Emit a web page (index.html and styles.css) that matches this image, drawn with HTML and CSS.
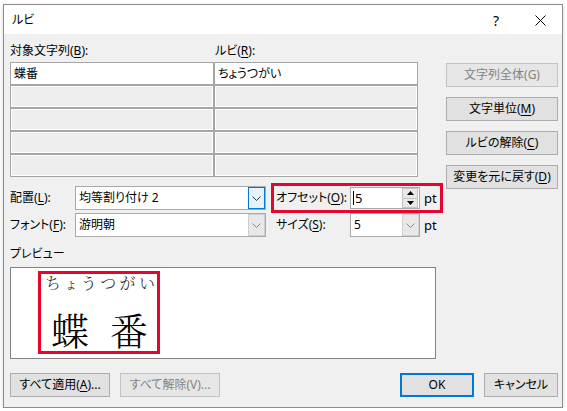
FILE: index.html
```html
<!DOCTYPE html>
<html lang="ja">
<head>
    <meta charset="UTF-8">
    <meta name="viewport" content="width=device-width, initial-scale=1.0">
    <title>ルビ</title>
    <link rel="stylesheet" href="styles.css">
</head>
<body>
    <div class="window">
        <div class="titlebar">
            <span class="title">ルビ</span>
            <span class="help">?</span>
            <svg class="close" width="11" height="11" viewBox="0 0 11 11">
                <path d="M0.5 0.5 L10.5 10.5 M10.5 0.5 L0.5 10.5" stroke="#000" stroke-width="1" fill="none"/>
            </svg>
        </div>

        <div class="content">
            <div class="main">
                <div class="left">
                    <div class="grid-labels">
                        <span>対象文字列(<u>B</u>):</span>
                        <span class="second">ルビ(<u>R</u>):</span>
                    </div>
                    <div class="ruby-grid">
                        <div class="cell filled">蝶番</div>
                        <div class="cell filled">ちょうつがい</div>
                        <div class="cell"></div>
                        <div class="cell"></div>
                        <div class="cell"></div>
                        <div class="cell"></div>
                        <div class="cell"></div>
                        <div class="cell"></div>
                        <div class="cell"></div>
                        <div class="cell"></div>
                    </div>

                    <div class="settings">
                        <div class="row">
                            <span class="lbl">配置(<u>L</u>):</span>
                            <div class="combo wide">
                                <span class="value">均等割り付け 2</span>
                                <span class="drop hot">
                                    <svg width="9" height="5" viewBox="0 0 9 5"><path d="M0.5 0.5 L4.5 4.5 L8.5 0.5" stroke="#333" fill="none"/></svg>
                                </span>
                            </div>
                            <div class="pair marked">
                                <span class="lbl2">オフセット(<u>O</u>):</span>
                                <div class="spin">
                                    <span class="value"><span class="caret"></span>5</span>
                                    <span class="spin-btns">
                                        <span class="spin-btn"><svg width="7" height="4" viewBox="0 0 7 4"><path d="M3.5 0 L7 4 L0 4 Z" fill="#000"/></svg></span>
                                        <span class="spin-btn"><svg width="7" height="4" viewBox="0 0 7 4"><path d="M0 0 L7 0 L3.5 4 Z" fill="#000"/></svg></span>
                                    </span>
                                </div>
                                <span class="unit">pt</span>
                            </div>
                        </div>
                        <div class="row">
                            <span class="lbl">フォント(<u>F</u>):</span>
                            <div class="combo wide">
                                <span class="value">游明朝</span>
                                <span class="drop">
                                    <svg width="9" height="5" viewBox="0 0 9 5"><path d="M0.5 0.5 L4.5 4.5 L8.5 0.5" stroke="#888" fill="none"/></svg>
                                </span>
                            </div>
                            <div class="pair">
                                <span class="lbl2">サイズ(<u>S</u>):</span>
                                <div class="combo small">
                                    <span class="value">5</span>
                                    <span class="drop">
                                        <svg width="9" height="5" viewBox="0 0 9 5"><path d="M0.5 0.5 L4.5 4.5 L8.5 0.5" stroke="#888" fill="none"/></svg>
                                    </span>
                                </div>
                                <span class="unit">pt</span>
                            </div>
                        </div>
                    </div>

                    <div class="preview-label">プレビュー</div>
                    <div class="preview">
                        <div class="sample">
                            <div class="sample-ruby">
                                <span>ち</span><span>ょ</span><span>う</span><span>つ</span><span>が</span><span>い</span>
                            </div>
                            <div class="sample-base">
                                <span>蝶</span><span>番</span>
                            </div>
                        </div>
                    </div>
                </div>

                <div class="side">
                    <div class="btn disabled">文字列全体(G)</div>
                    <div class="btn">文字単位(<u>M</u>)</div>
                    <div class="btn">ルビの解除(<u>C</u>)</div>
                    <div class="btn">変更を元に戻す(<u>D</u>)</div>
                </div>
            </div>

            <div class="footer">
                <div class="btn wide-btn">すべて適用(<u>A</u>)...</div>
                <div class="btn wide-btn disabled">すべて解除(V)...</div>
                <div class="btn small-btn default">OK</div>
                <div class="btn small-btn">キャンセル</div>
            </div>
        </div>
    </div>
</body>
</html>
```

FILE: styles.css
```css
* {
    margin: 0;
    padding: 0;
    box-sizing: border-box;
}

body {
    background: #fff;
    font-family: "Noto Sans", "Noto Sans CJK JP", sans-serif;
    font-size: 12px;
    font-feature-settings: "palt";
    color: #000;
    padding: 4px 0 0 3px;
    white-space: nowrap;
}

u {
    text-decoration: underline;
    text-underline-offset: 2px;
}

.window {
    width: 560px;
    border: 1px solid #8c8c8c;
    background: #f0f0f0;
    box-shadow: 0 1px 4px rgba(0, 0, 0, 0.15);
}

/* title bar */
.titlebar {
    height: 29px;
    background: #fff;
    display: flex;
    align-items: center;
    padding: 0 16px 0 8px;
    line-height: 16px;
}

.titlebar .title {
    margin-top: 1px;
}

.titlebar .help {
    margin-left: auto;
    font-size: 14px;
    margin-right: 36px;
    margin-top: 2px;
}

.titlebar .close {
    margin-top: 2px;
}

.content {
    padding: 8px 4px 10px 6px;
}

.main {
    display: flex;
}

.left {
    width: 435px;
}

/* string / ruby table */
.grid-labels {
    display: grid;
    grid-template-columns: 204px 204px;
    height: 18px;
    line-height: 18px;
    margin-bottom: 2px;
}

.grid-labels .second {
    padding-left: 1px;
}

.ruby-grid {
    display: grid;
    grid-template-columns: 204px 204px;
    grid-auto-rows: 23px;
}

.cell {
    border: 1px solid #a6a6a6;
    background: #eeeeee;
    box-shadow: inset 0 0 0 1px #fff;
    line-height: 21px;
    padding-left: 3px;
}

.cell.filled {
    background: #fff;
    box-shadow: none;
}

/* alignment / offset / font / size */
.settings {
    margin-top: 9px;
    display: flex;
    flex-direction: column;
    gap: 3px;
}

.row {
    display: flex;
    align-items: center;
    height: 24px;
}

.lbl {
    width: 65px;
    line-height: 18px;
}

.pair {
    display: flex;
    align-items: center;
    margin-left: 10px;
    width: 164px;
    height: 24px;
    position: relative;
}

.pair.marked::after {
    content: '';
    position: absolute;
    left: -5px;
    right: -3px;
    top: -3px;
    bottom: -3px;
    border: 3px solid #e5062f;
}

.lbl2 {
    width: 74px;
    line-height: 18px;
}

.unit {
    margin-left: 4px;
    font-size: 13px;
}

.combo {
    display: flex;
    height: 24px;
    border: 1px solid #a9a9a9;
    background: #fff;
}

.combo.wide {
    width: 191px;
}

.combo.small {
    width: 70px;
}

.combo .value,
.spin .value {
    flex: 1;
    line-height: 22px;
    padding-left: 3px;
    display: flex;
    align-items: center;
}

.drop {
    width: 17px;
    height: 22px;
    border: 1px solid #cfcfcf;
    background: #e8e8e8;
    display: flex;
    align-items: center;
    justify-content: center;
}

.drop.hot {
    border-color: #0078d7;
    background: #e5f1fb;
}

.spin {
    display: flex;
    width: 70px;
    height: 22px;
    border: 1px solid #a9a9a9;
    background: #fff;
}

.spin .caret {
    display: inline-block;
    width: 1px;
    height: 14px;
    background: #000;
    margin-right: 1px;
}

.spin .value {
    padding-left: 2px;
    font-size: 13px;
}

.spin-btns {
    width: 16px;
    display: flex;
    flex-direction: column;
    margin-right: 1px;
}

.spin-btn {
    flex: 1;
    border: 1px solid #c4c4c4;
    background: #e8e8e8;
    display: flex;
    align-items: center;
    justify-content: center;
}

.spin-btn + .spin-btn {
    border-top: none;
}

/* preview */
.preview-label {
    margin-top: 8px;
    line-height: 18px;
    height: 18px;
}

.preview {
    margin-top: 4px;
    width: 426px;
    height: 92px;
    border: 1px solid #828282;
    background: #fff;
    padding: 3px 0 0 27px;
}

.sample {
    width: 122px;
    height: 83px;
    border: 3px solid #e5062f;
    font-family: "Noto Serif CJK JP", "Noto Sans CJK JP", serif;
    font-feature-settings: normal;
    font-weight: 300;
}

.sample-ruby {
    display: flex;
    justify-content: space-between;
    font-size: 16px;
    line-height: 18px;
    padding: 0 2px 0 4px;
    color: #222;
}

.sample-ruby span:nth-child(2) {
    font-size: 13px;
    align-self: flex-end;
}

.sample-base {
    display: flex;
    gap: 21px;
    font-size: 38px;
    line-height: 38px;
    margin-top: 18px;
    padding-left: 10px;
}

/* buttons */
.side {
    width: 112px;
    margin-left: auto;
    margin-top: 21px;
    display: flex;
    flex-direction: column;
    gap: 10px;
}

.btn {
    height: 24px;
    border: 1px solid #adadad;
    background: #e1e1e1;
    display: flex;
    align-items: center;
    justify-content: center;
    line-height: 18px;
}

.btn.disabled {
    background: #e6e6e6;
    border-color: #c2c2c2;
    color: #838383;
}

.btn.default {
    border: 2px solid #0078d7;
}

.footer {
    margin-top: 14px;
    display: flex;
    gap: 10px;
}

.wide-btn {
    width: 100px;
}

.small-btn {
    width: 74px;
}

.footer .default {
    margin-left: auto;
}
```
